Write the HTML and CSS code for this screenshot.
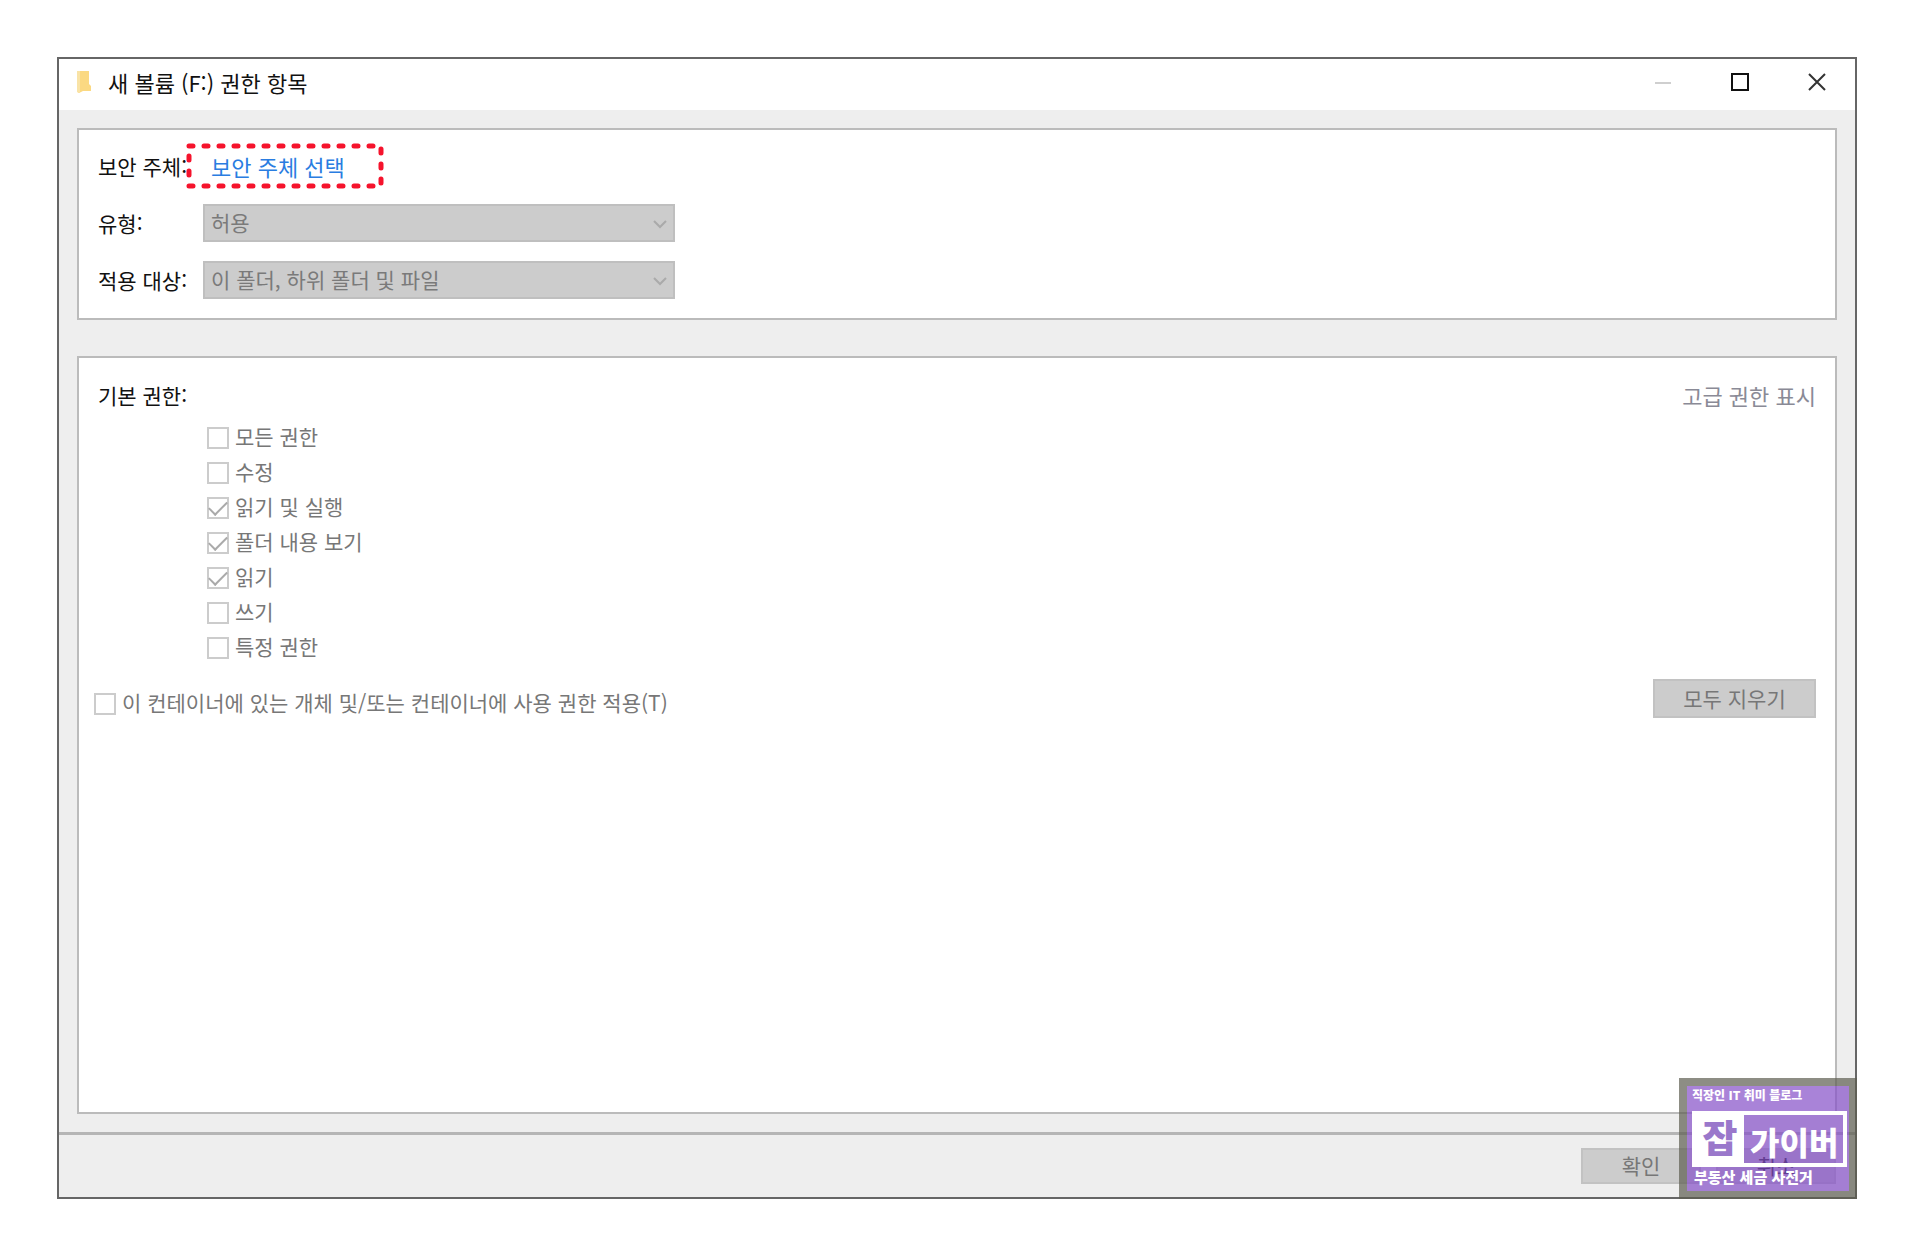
FILE: index.html
```html
<!DOCTYPE html>
<html lang="ko">
<head>
    <meta charset="UTF-8">
    <meta name="viewport" content="width=device-width, initial-scale=1.0">
    <title>새 볼륨 (F:) 권한 항목</title>
    <link rel="stylesheet" href="styles.css">
</head>
<body>
    <div class="window">
        <header class="title-bar">
            <svg class="folder-icon" width="18" height="24" viewBox="0 0 18 24">
                <path d="M2 1h12v13l2 2v5h-8l-4 2-2-1z" fill="#fbd982"/>
                <path d="M2 1h3v21H2z" fill="#f9e3a6"/>
            </svg>
            <h1>새 볼륨 (F:) 권한 항목</h1>
            <div class="window-buttons">
                <button type="button" aria-label="최소화" disabled>
                    <svg width="18" height="18" viewBox="0 0 18 18"><path d="M1 10h16" stroke="#cfcfcf" stroke-width="2"/></svg>
                </button>
                <button type="button" aria-label="최대화">
                    <svg width="18" height="18" viewBox="0 0 18 18"><path d="M1 1h16v16H1z" fill="none" stroke="#111" stroke-width="2"/></svg>
                </button>
                <button type="button" aria-label="닫기">
                    <svg width="18" height="18" viewBox="0 0 18 18"><path d="M1 1l16 16M17 1L1 17" stroke="#333" stroke-width="2"/></svg>
                </button>
            </div>
        </header>

        <main class="content">
            <section class="panel principal">
                <div class="field">
                    <span class="field-label">보안 주체:</span>
                    <span class="highlight">
                        <a href="#">보안 주체 선택</a>
                        <svg class="highlight-box" width="198" height="46" viewBox="0 0 198 46">
                            <rect x="3" y="3" width="192" height="40"/>
                        </svg>
                    </span>
                </div>
                <div class="field">
                    <label class="field-label" for="type">유형:</label>
                    <div class="select-box">
                        <select id="type" disabled><option>허용</option></select>
                        <svg class="chevron" width="14" height="10" viewBox="0 0 14 10"><path d="M1 2l6 6 6-6"/></svg>
                    </div>
                </div>
                <div class="field">
                    <label class="field-label" for="target">적용 대상:</label>
                    <div class="select-box">
                        <select id="target" disabled><option>이 폴더, 하위 폴더 및 파일</option></select>
                        <svg class="chevron" width="14" height="10" viewBox="0 0 14 10"><path d="M1 2l6 6 6-6"/></svg>
                    </div>
                </div>
            </section>

            <section class="panel permissions">
                <div class="panel-head">
                    <h2>기본 권한:</h2>
                    <a href="#" class="advanced">고급 권한 표시</a>
                </div>
                <div class="check-list">
                    <label class="check"><input type="checkbox" disabled><span>모든 권한</span></label>
                    <label class="check"><input type="checkbox" disabled><span>수정</span></label>
                    <label class="check"><input type="checkbox" checked disabled><span>읽기 및 실행</span></label>
                    <label class="check"><input type="checkbox" checked disabled><span>폴더 내용 보기</span></label>
                    <label class="check"><input type="checkbox" checked disabled><span>읽기</span></label>
                    <label class="check"><input type="checkbox" disabled><span>쓰기</span></label>
                    <label class="check"><input type="checkbox" disabled><span>특정 권한</span></label>
                </div>
                <div class="panel-foot">
                    <label class="check"><input type="checkbox" disabled><span>이 컨테이너에 있는 개체 및/또는 컨테이너에 사용 권한 적용(T)</span></label>
                    <button type="button" class="btn btn-wide" disabled>모두 지우기</button>
                </div>
            </section>
        </main>

        <footer class="actions">
            <button type="button" class="btn" disabled>확인</button>
            <button type="button" class="btn btn-cancel">취소</button>
        </footer>

        <div class="blog-badge">
            <div class="badge-top">직장인 IT 취미 블로그</div>
            <div class="badge-name">
                <span class="badge-first">잡</span>
                <span class="badge-rest">가이버</span>
            </div>
            <div class="badge-bottom">부동산 세금 사전거</div>
        </div>
    </div>
</body>
</html>
```
FILE: styles.css
```css
* {
    box-sizing: border-box;
}

body {
    margin: 0;
    padding: 57px;
    background-color: #fff;
    color: #111;
    font-family: "Noto Sans CJK KR", sans-serif;
    font-size: 21px;
    line-height: 32px;
}

h1, h2 {
    margin: 0;
    font-size: 21px;
    font-weight: normal;
}

a {
    font-size: 22px;
    text-decoration: none;
}

button, select {
    font: inherit;
}

.window {
    position: relative;
    display: flex;
    flex-direction: column;
    min-height: calc(100vh - 114px);
    border: 2px solid #666;
    background-color: #eee;
}

/* title bar */
.title-bar {
    display: flex;
    align-items: center;
    height: 51px;
    padding: 0 0 5px 16px;
    background-color: #fff;
}

.title-bar h1 {
    margin-left: 15px;
    font-size: 22px;
}

.window-buttons {
    display: flex;
    margin-left: auto;
}

.window-buttons button {
    display: flex;
    align-items: center;
    justify-content: center;
    width: 77px;
    height: 46px;
    padding: 0;
    border: none;
    background: none;
}

/* panels */
.content {
    display: flex;
    flex: 1;
    flex-direction: column;
    gap: 36px;
    padding: 18px;
}

.panel {
    border: 2px solid #bbb;
    background-color: #fff;
}

.principal {
    display: flex;
    flex-direction: column;
    gap: 19px;
    padding: 17px 18px 19px 19px;
}

.field {
    display: flex;
    align-items: center;
    height: 38px;
}

.field-label {
    width: 105px;
    white-space: nowrap;
}

.highlight {
    position: relative;
    padding-left: 8px;
}

.highlight a {
    color: #2a7de1;
}

.highlight-box {
    position: absolute;
    top: -7px;
    left: -17px;
    pointer-events: none;
}

.highlight-box rect {
    fill: none;
    stroke: #f5132c;
    stroke-width: 5;
    stroke-linecap: round;
    stroke-dasharray: 4 11;
}

.select-box {
    position: relative;
    width: 472px;
    height: 38px;
}

.select-box select {
    appearance: none;
    width: 100%;
    height: 100%;
    padding: 0 40px 4px 6px;
    border: 2px solid #bfbfbf;
    border-radius: 0;
    background-color: #ccc;
    color: #7a7a7a;
    opacity: 1;
}

.chevron {
    position: absolute;
    top: 15px;
    right: 8px;
    fill: none;
    stroke: #aaa;
    stroke-width: 2;
}

.permissions {
    flex: 1;
    padding: 21px 19px;
}

.panel-head {
    display: flex;
    justify-content: space-between;
}

.advanced {
    color: #8a8a96;
}

.check-list {
    padding: 9px 0 0 109px;
}

.check {
    display: flex;
    align-items: center;
    gap: 6px;
    height: 35px;
    color: #777;
}

.check span {
    padding-bottom: 4px;
}

.check input {
    appearance: none;
    display: grid;
    place-items: center;
    width: 22px;
    height: 22px;
    margin: 0;
    border: 2px solid #ccc;
    background-color: #fff;
}

.check input:checked::before {
    content: "";
    width: 16px;
    height: 8px;
    border: solid #aaa;
    border-width: 0 0 2px 2px;
    transform: translateY(-2px) rotate(-45deg);
}

.panel-foot {
    display: flex;
    justify-content: space-between;
    margin: 14px 0 0 -4px;
}

.panel-foot .check {
    height: 50px;
}

/* buttons */
.btn {
    width: 120px;
    height: 36px;
    padding: 0 0 2px;
    border: 2px solid #c2c2c2;
    background-color: #ccc;
    color: #777;
    line-height: 30px;
}

.btn-wide {
    width: 163px;
    height: 39px;
}

.btn-cancel {
    color: #111;
}

.actions {
    display: flex;
    justify-content: flex-end;
    gap: 15px;
    padding: 13px 19px;
    border-top: 3px solid #b5b5b5;
}

/* blog badge over the bottom right corner */
.blog-badge {
    position: absolute;
    right: -2px;
    bottom: -2px;
    width: 178px;
    height: 121px;
    padding: 2px 0 0 5px;
    border: 8px solid rgba(92, 92, 80, 0.7);
    background-color: rgba(132, 79, 199, 0.7);
    background-clip: padding-box;
    color: #fff;
    font-weight: 900;
    white-space: nowrap;
}

.badge-top {
    font-size: 12px;
    line-height: 14px;
}

.badge-name {
    display: flex;
    width: 155px;
    height: 56px;
    margin-top: 9px;
    border: 4px solid #fff;
}

.badge-first {
    width: 48px;
    background-color: #fff;
    color: #9a78cb;
    font-size: 38px;
    line-height: 42px;
    text-align: center;
}

.badge-rest {
    padding-left: 6px;
    font-size: 32px;
    line-height: 52px;
}

.badge-bottom {
    padding-left: 2px;
    font-size: 15px;
    line-height: 20px;
}
```
